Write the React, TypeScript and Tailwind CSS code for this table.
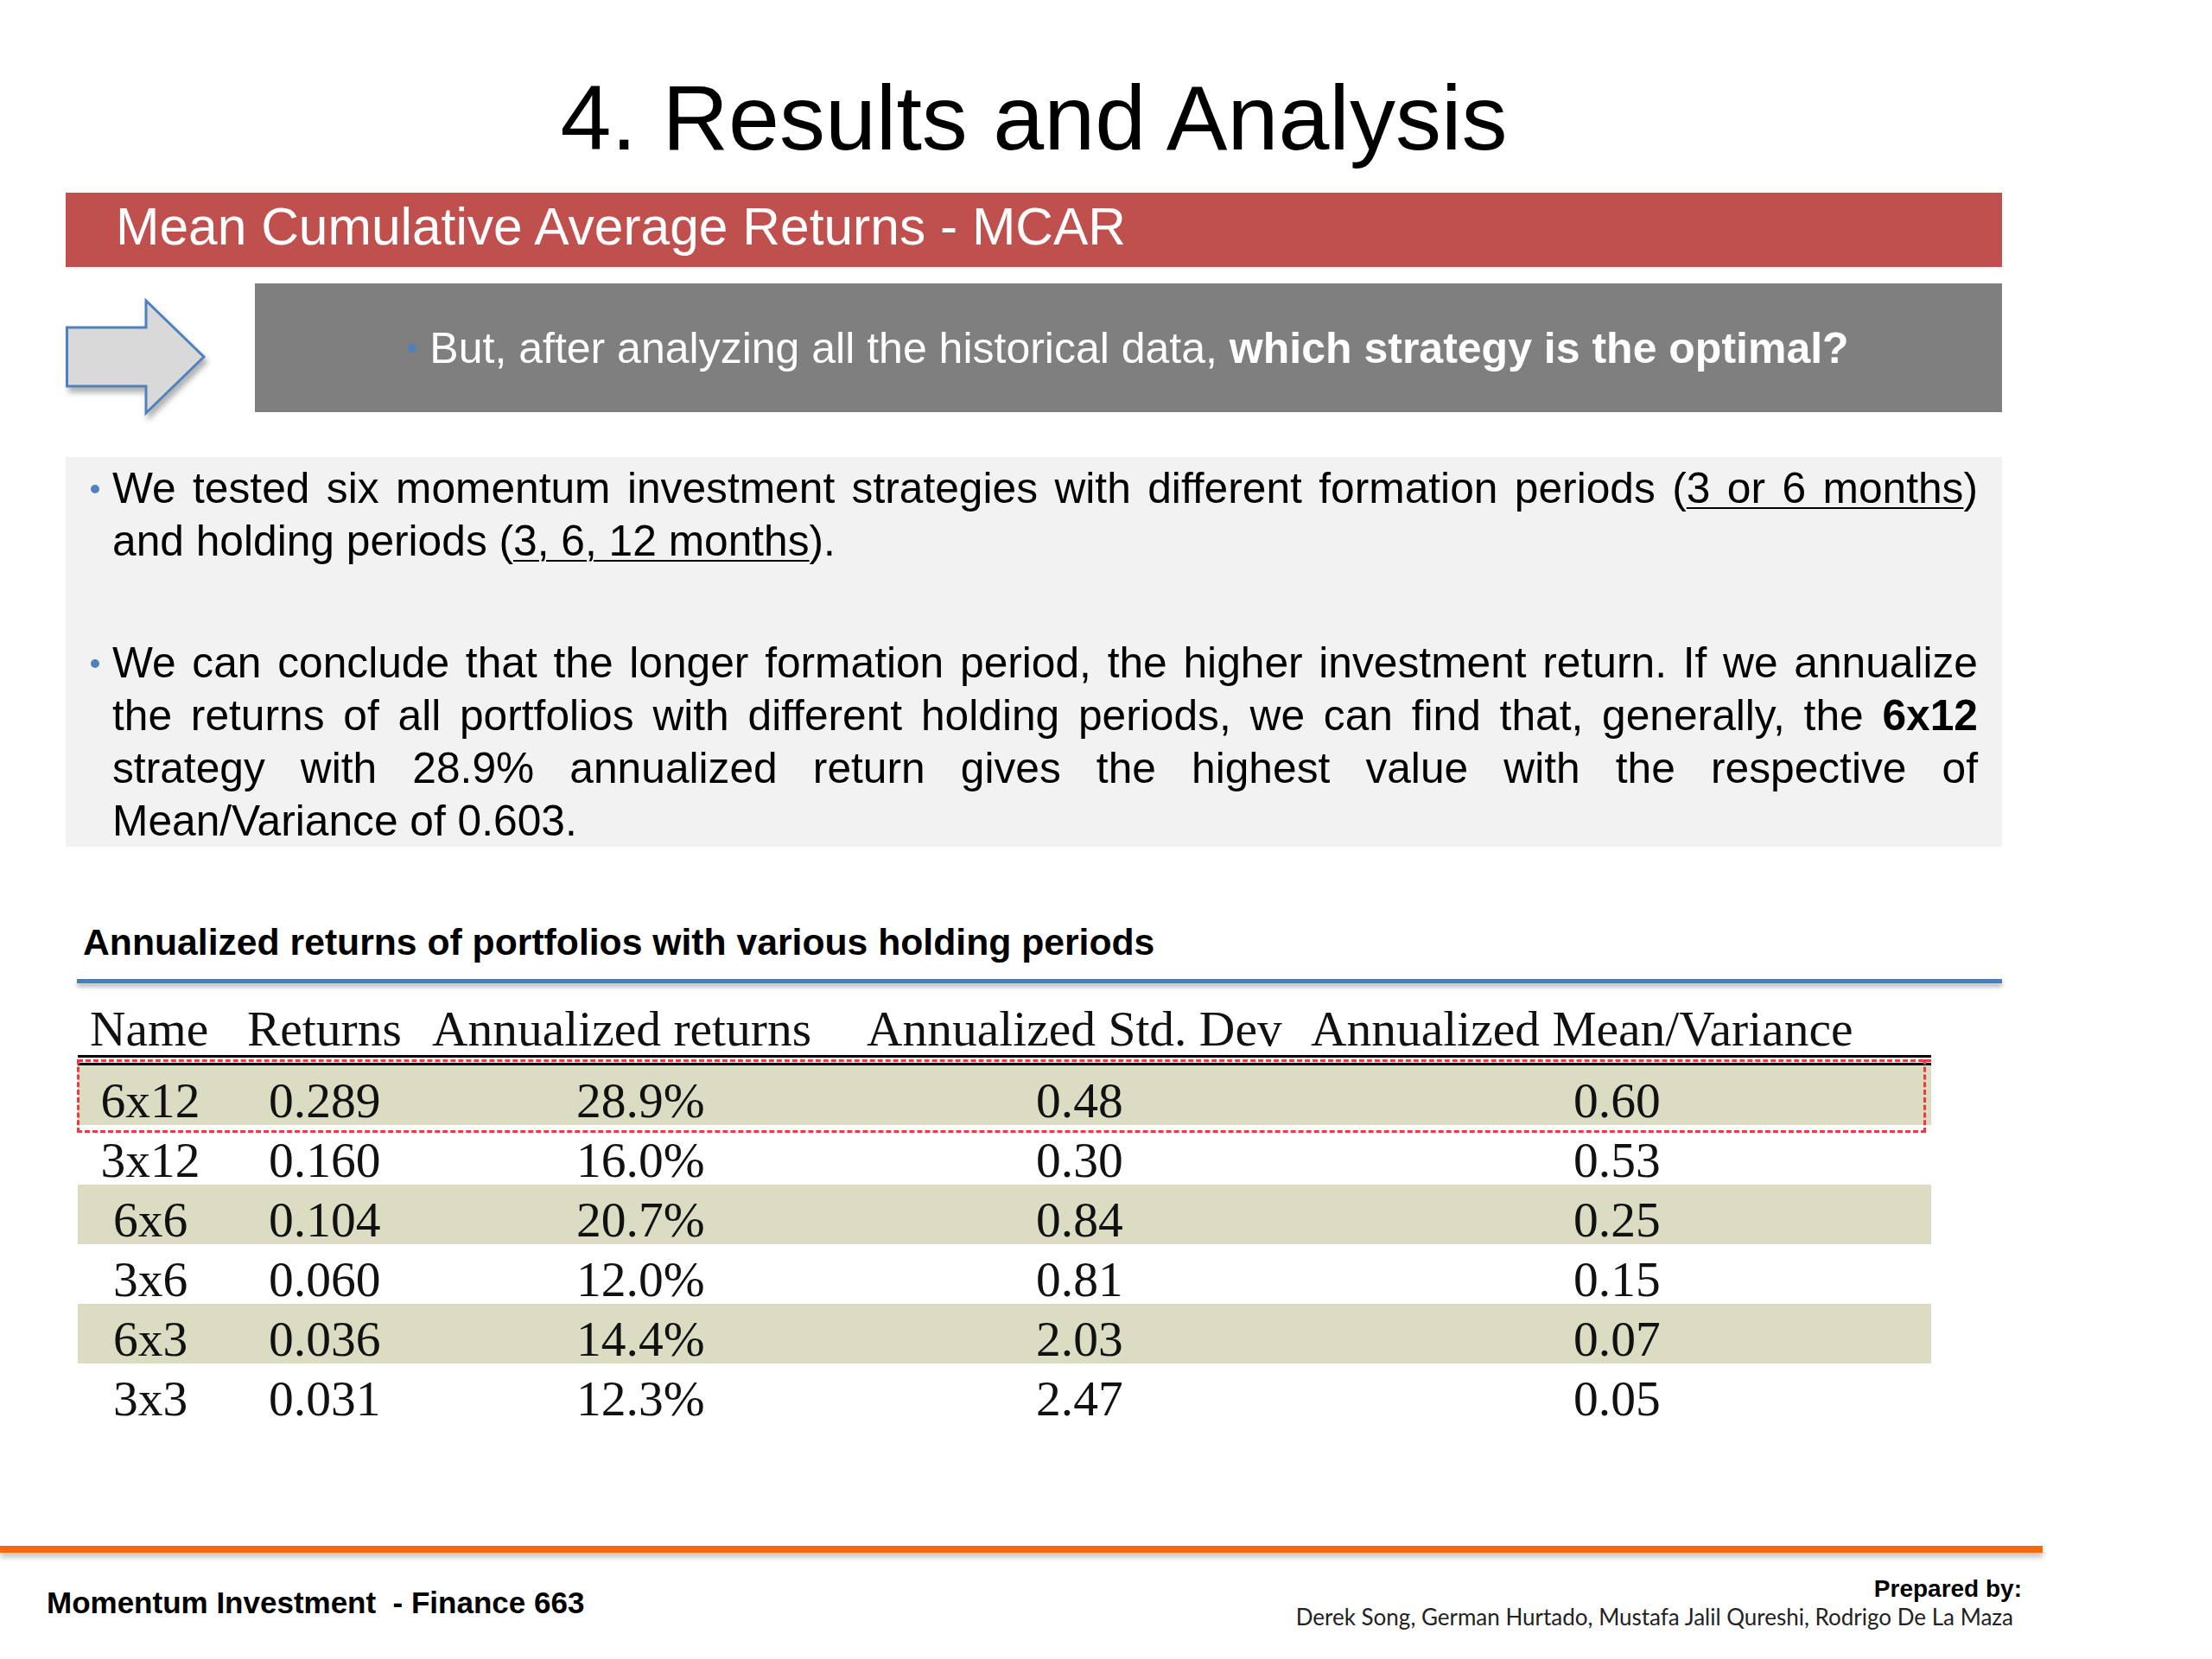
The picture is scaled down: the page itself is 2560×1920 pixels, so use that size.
import React from 'react';

type Row = { name: string; ret: string; ann: string; std: string; mv: string; shade: boolean };

const rows: Row[] = [
  { name: '6x12', ret: '0.289', ann: '28.9%', std: '0.48', mv: '0.60', shade: true },
  { name: '3x12', ret: '0.160', ann: '16.0%', std: '0.30', mv: '0.53', shade: false },
  { name: '6x6', ret: '0.104', ann: '20.7%', std: '0.84', mv: '0.25', shade: true },
  { name: '3x6', ret: '0.060', ann: '12.0%', std: '0.81', mv: '0.15', shade: false },
  { name: '6x3', ret: '0.036', ann: '14.4%', std: '2.03', mv: '0.07', shade: true },
  { name: '3x3', ret: '0.031', ann: '12.3%', std: '2.47', mv: '0.05', shade: false },
];

const Dot = () => <span className="block mt-[26px] w-[10px] h-[10px] rounded-full bg-[#4f81bd]" />;

const Arrow = () => (
  <svg width="219" height="149" viewBox="0 0 219 149" className="block overflow-visible">
    <defs>
      <filter id="arrowShadow" x="-20%" y="-20%" width="150%" height="150%">
        <feDropShadow dx="3" dy="6" stdDeviation="3" floodColor="#000000" floodOpacity="0.3" />
      </filter>
    </defs>
    <polygon
      points="1.5,51 93,51 93,20 160,85 93,150 93,119 1.5,119"
      fill="#d9d9d9"
      stroke="#4f81bd"
      strokeWidth="3"
      filter="url(#arrowShadow)"
    />
  </svg>
);

const App: React.FC = () => {
  return (
    <div className="w-[2560px] h-[1920px] bg-white overflow-hidden flex flex-col font-['Liberation_Sans',Arial,sans-serif] text-black">
      <div className="ml-[76px] w-[2241px] flex flex-col">
        {/* title */}
        <h1 className="pt-[83px] text-center text-[106px] leading-[106px] font-normal">4. Results and Analysis</h1>

        {/* section bar */}
        <div className="mt-[34px] h-[86px] bg-[#c0504d] pl-[58px] text-white text-[60.5px] leading-[78px]">
          Mean Cumulative Average Returns - MCAR
        </div>

        {/* question */}
        <div className="mt-[19px] h-[149px] flex">
          <div className="w-[219px] shrink-0">
            <Arrow />
          </div>
          <div className="flex-1 h-[149px] bg-[#7f7f7f] flex items-center justify-center text-white text-[50px] leading-[58px]">
            <span className="w-[10px] h-[10px] rounded-full bg-[#4f81bd] mr-[15px]" />
            <span>
              But, after analyzing all the historical data, <b>which strategy is the optimal?</b>
            </span>
          </div>
        </div>

        {/* findings */}
        <div className="mt-[52px] h-[451px] bg-[#f2f2f2] pt-[6px] pl-[29px] pr-[28px] text-[49.7px] leading-[61px]">
          <div className="flex items-start">
            <div className="w-[25px] shrink-0">
              <Dot />
            </div>
            <div className="flex-1">
              <span className="block [text-align-last:justify]">
                We tested six momentum investment strategies with different formation periods (
                <span className="underline decoration-2 underline-offset-[5px]">3 or 6 months</span>)
              </span>
              <span className="block">
                and holding periods (<span className="underline decoration-2 underline-offset-[5px]">3, 6, 12 months</span>).
              </span>
            </div>
          </div>
          <div className="flex items-start mt-[80px]">
            <div className="w-[25px] shrink-0">
              <Dot />
            </div>
            <div className="flex-1">
              <span className="block [text-align-last:justify]">
                We can conclude that the longer formation period, the higher investment return. If we annualize
              </span>
              <span className="block [text-align-last:justify]">
                the returns of all portfolios with different holding periods, we can find that, generally, the <b>6x12</b>
              </span>
              <span className="block [text-align-last:justify]">
                strategy with 28.9% annualized return gives the highest value with the respective of
              </span>
              <span className="block">Mean/Variance of 0.603.</span>
            </div>
          </div>
        </div>

        {/* table caption */}
        <div className="mt-[86px] pl-[20px] text-[42.7px] leading-[48px] font-bold">
          Annualized returns of portfolios with various holding periods
        </div>
        <div className="mt-[19px] ml-[13px] w-[2228px] h-[5px] bg-[#4a7ebb] shadow-[0_4px_5px_rgba(0,0,0,0.3)]" />

        {/* table */}
        <div className="mt-[25px] ml-[14px] w-[2145px] relative font-['Liberation_Serif','Times_New_Roman',serif] text-[57.5px] leading-[55px] text-[#111]">
          <div className="grid grid-cols-[196px_214px_503px_514px_718px] pb-[3px]">
            <div className="pl-[14px]">Name</div>
            <div>Returns</div>
            <div>Annualized returns</div>
            <div>Annualized Std. Dev</div>
            <div>Annualized Mean/Variance</div>
          </div>
          <div className="h-[12px] border-y-[3px] border-black flex items-center">
            <div className="w-full border-t-[3px] border-dashed border-[#ef3b3b]" />
          </div>
          {rows.map((r) => (
            <div
              key={r.name}
              className={`grid grid-cols-[196px_214px_503px_514px_718px] h-[69px] pt-[13px] ${r.shade ? 'bg-[#dcdcc3]' : 'bg-white'}`}
            >
              <div className="w-[168px] text-center">{r.name}</div>
              <div className="pl-[25px]">{r.ret}</div>
              <div className="pl-[167px]">{r.ann}</div>
              <div className="pl-[196px]">{r.std}</div>
              <div className="pl-[304px]">{r.mv}</div>
            </div>
          ))}
          <div className="absolute left-[-1px] top-[63px] w-[2140px] h-[85px] border-x-[3px] border-b-[3px] border-dashed border-[#ef3b3b]" />
        </div>
      </div>

      {/* footer */}
      <div className="mt-[142px] w-[2364px] h-[8px] bg-[#f9680c] shadow-[0_5px_6px_rgba(0,0,0,0.25)]" />
      <div className="mt-[26px] w-[2364px] pl-[54px] pr-[24px] flex justify-between items-start">
        <div className="mt-[12px] text-[35px] leading-[40px] font-bold whitespace-pre">Momentum Investment  - Finance 663</div>
        <div className="flex flex-col items-end">
          <div className="text-[28px] leading-[32px] font-bold">Prepared by:</div>
          <div className="pr-[10px] text-[26px] leading-[32px] text-[#222] font-['Lato',sans-serif]">
            Derek Song, German Hurtado, Mustafa Jalil Qureshi, Rodrigo De La Maza
          </div>
        </div>
      </div>
    </div>
  );
};

export default App;
